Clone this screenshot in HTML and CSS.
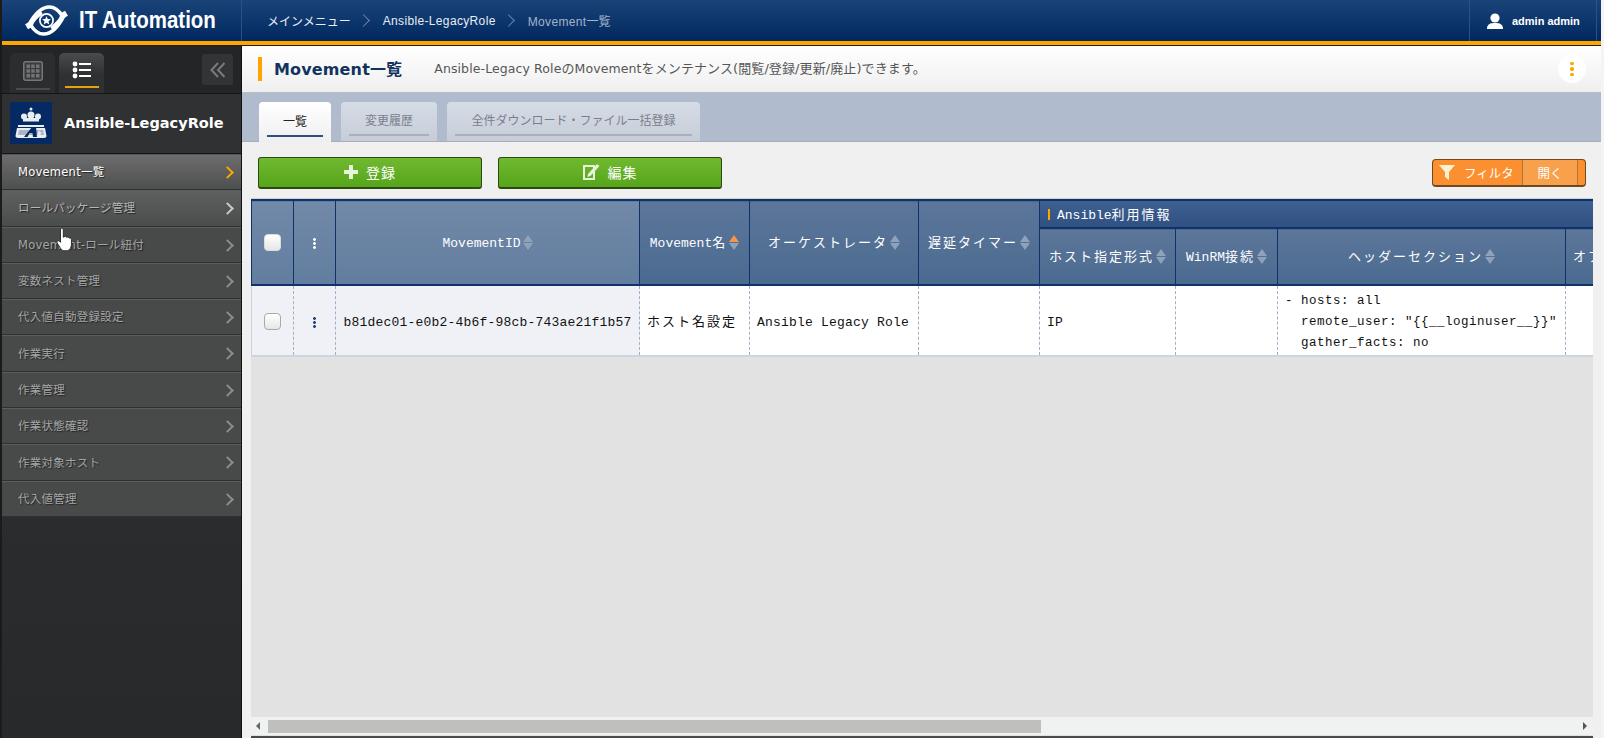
FILE: index.html
```html
<!DOCTYPE html>
<html lang="ja">
<head>
<meta charset="utf-8">
<title>Movement一覧</title>
<link rel="stylesheet" href="styles.css">
</head>
<body>
<div class="frame">
  <header class="topbar">
    <div class="brand">
      <svg class="brand-logo" viewBox="0 0 44 34" width="43" height="33">
        <g fill="none" stroke="#fff" stroke-linecap="round">
          <path d="M4 21 C10 10 17 3 25 3 C31 3 35 7 38 12 C36 18 32 21 28 24" stroke-width="3.600"/>
          <path d="M40 12 C34 24 27 31 19 31 C13 31 9 27 6 22 C8 16 12 13 16 10" stroke-width="3.600"/>
          <circle cx="22" cy="17" r="6.800" stroke-width="1.800"/>
        </g>
        <path d="M22 12.500l1.300 3 3.200.3-2.400 2.100.7 3.100-2.800-1.600-2.800 1.600.7-3.100-2.400-2.100 3.200-.3z" fill="#fff"/>
        <rect x="1" y="19" width="6" height="6" fill="#fff" transform="rotate(-30 4 22)"/>
        <rect x="37" y="8" width="6" height="6" fill="#fff" transform="rotate(-30 40 11)"/>
      </svg>
      <span class="brand-name">IT Automation</span>
    </div>
    <nav class="crumbs">
      <span>メインメニュー</span><i class="crumb-sep"></i>
      <span class="crumb-lat">Ansible-LegacyRole</span><i class="crumb-sep"></i>
      <span class="crumb-now"><span class="crumb-lat">Movement</span>一覧</span>
    </nav>
    <div class="user">
      <svg viewBox="0 0 18 16" width="18" height="16"><circle cx="9" cy="5" r="4.600" fill="#fff"/><path d="M1 16c0-5 3-6 8-6s8 1 8 6z" fill="#fff"/></svg>
      <span>admin admin</span>
    </div>
  </header>
  <div class="accent"></div>
  <div class="body">
    <aside class="side">
      <div class="side-tabs">
        <div class="side-tab">
          <svg viewBox="0 0 20 20" width="20" height="20"><rect x=".75" y=".75" width="18.500" height="18.500" rx="2" fill="#3a3c3d" stroke="#777" stroke-width="1.500"/><g fill="#6f7478"><rect x="3.500" y="3.500" width="3.500" height="3.500"/><rect x="8.200" y="3.500" width="3.500" height="3.500"/><rect x="13" y="3.500" width="3.500" height="3.500"/><rect x="3.500" y="8.200" width="3.500" height="3.500"/><rect x="8.200" y="8.200" width="3.500" height="3.500"/><rect x="13" y="8.200" width="3.500" height="3.500"/><rect x="3.500" y="13" width="3.500" height="3.500"/><rect x="8.200" y="13" width="3.500" height="3.500"/><rect x="13" y="13" width="3.500" height="3.500"/></g></svg>
          <i class="side-tab-line"></i>
        </div>
        <div class="side-tab side-tab-on">
          <svg viewBox="0 0 20 18" width="20" height="18" fill="#fff"><circle cx="3" cy="3" r="2.400"/><circle cx="3" cy="9" r="2.400"/><circle cx="3" cy="15" r="2.400"/><rect x="7" y="2" width="12" height="2"/><rect x="7" y="8" width="12" height="2"/><rect x="7" y="14" width="12" height="2"/></svg>
          <i class="side-tab-line"></i>
        </div>
        <div class="collapse">
          <svg viewBox="0 0 16 16" width="16" height="16" fill="none" stroke="#7a7a7a" stroke-width="2"><path d="M8 1 1.500 8 8 15M14.500 1 8 8l6.500 7"/></svg>
        </div>
      </div>
      <div class="side-title">
        <svg class="side-logo" viewBox="0 0 42 42" width="42" height="42">
          <rect width="42" height="42" fill="#052a63"/>
          <g fill="#e8edf3">
            <circle cx="21" cy="7" r="1.500"/>
            <circle cx="14" cy="14.500" r="3"/>
            <circle cx="21" cy="13" r="3.500"/>
            <circle cx="28" cy="14.500" r="3"/>
            <rect x="13" y="16" width="16" height="3.500"/>
            <rect x="8" y="23" width="26" height="2"/>
            <path d="M7 26h28l1.500 8c0 1-1 2-2.500 2H8c-1.500 0-2.500-1-2.500-2z"/>
          </g>
          <path d="M9 28h24l1 5H8z" fill="#a9b6c8"/>
          <path d="M14 35l8-10h4l1 10h-4l-.5-4h-3l-2 4z" fill="#052a63"/>
          <path d="M29 28l1 2 2.100.2-1.600 1.400.5 2.100-2-1-2 1" fill="#e8edf3"/>
        </svg>
        <span>Ansible-LegacyRole</span>
      </div>
      <ul class="menu">
        <li class="menu-item menu-cur">Movement一覧</li>
        <li class="menu-item menu-hover">ロールパッケージ管理</li>
        <li class="menu-item">Movement-ロール紐付</li>
        <li class="menu-item">変数ネスト管理</li>
        <li class="menu-item">代入値自動登録設定</li>
        <li class="menu-item">作業実行</li>
        <li class="menu-item">作業管理</li>
        <li class="menu-item">作業状態確認</li>
        <li class="menu-item">作業対象ホスト</li>
        <li class="menu-item">代入値管理</li>
      </ul>
    </aside>
    <main class="main">
      <div class="titlebar">
        <h1 class="page-title">Movement一覧</h1>
        <p class="page-desc"><span class="desc-lat">Ansible-Legacy Role</span>の<span class="desc-lat">Movement</span>をメンテナンス(閲覧/登録/更新/廃止)できます。</p>
        <div class="more"><i></i><i></i><i></i></div>
      </div>
      <div class="tabs">
        <div class="tab tab-on"><span>一覧</span></div>
        <div class="tab tab-b"><span>変更履歴</span></div>
        <div class="tab tab-c"><span>全件ダウンロード・ファイル一括登録</span></div>
      </div>
      <div class="content">
        <div class="toolbar">
          <button class="btn">
            <svg viewBox="0 0 14 14" width="14" height="14" fill="#e8f3dc"><rect x="5" width="4" height="14"/><rect y="5" width="14" height="4"/></svg>
            <span>登録</span>
          </button>
          <button class="btn btn-edit">
            <svg viewBox="0 0 17 17" width="17" height="17"><path d="M1 3h10v13H1z" fill="none" stroke="#e8f3dc" stroke-width="2"/><path d="M5 11l9-10 2.500 2-9 10-3 1z" fill="#e8f3dc"/></svg>
            <span>編集</span>
          </button>
          <div class="filter">
            <div class="filter-main">
              <svg viewBox="0 0 16 15" width="16" height="15"><path d="M0 0h16L10 7v8L6 12V7z" fill="#fdf2d0"/></svg>
              <span>フィルタ</span>
            </div>
            <div class="filter-open">開く</div>
            <div class="filter-end"></div>
          </div>
        </div>
        <div class="table-panel">
          <div class="table-clip">
            <table class="grid">
              <colgroup>
                <col class="c-chk"><col class="c-menu"><col class="c-id"><col class="c-name"><col class="c-orch"><col class="c-delay"><col class="c-host"><col class="c-win"><col class="c-head"><col class="c-opt">
              </colgroup>
              <thead>
                <tr>
                  <th rowspan="2" class="th-fixed"><i class="check check-head"></i></th>
                  <th rowspan="2" class="th-fixed"><i class="vdots vdots-w"></i></th>
                  <th rowspan="2" class="th-fixed"><span class="lat">MovementID</span><i class="sort"></i></th>
                  <th rowspan="2"><span class="lat">Movement</span>名<i class="sort sort-up"></i></th>
                  <th rowspan="2">オーケストレータ<i class="sort"></i></th>
                  <th rowspan="2">遅延タイマー<i class="sort"></i></th>
                  <th colspan="4" class="th-group"><b class="group-mark"></b><span class="lat">Ansible</span>利用情報</th>
                </tr>
                <tr>
                  <th>ホスト指定形式<i class="sort"></i></th>
                  <th><span class="lat">WinRM</span>接続<i class="sort"></i></th>
                  <th>ヘッダーセクション<i class="sort"></i></th>
                  <th class="th-left">オプションパラメータ</th>
                </tr>
              </thead>
              <tbody>
                <tr>
                  <td class="td-fixed td-c"><i class="check"></i></td>
                  <td class="td-fixed td-c"><i class="vdots"></i></td>
                  <td class="td-fixed td-c"><span class="lat">b81dec01-e0b2-4b6f-98cb-743ae21f1b57</span></td>
                  <td>ホスト名設定</td>
                  <td class="td-lat"><span class="lat">Ansible Legacy Role</span></td>
                  <td></td>
                  <td><span class="lat">IP</span></td>
                  <td></td>
                  <td><pre class="yaml">- hosts: all
  remote_user: "{{__loginuser__}}"
  gather_facts: no</pre></td>
                  <td></td>
                </tr>
              </tbody>
            </table>
          </div>
          <div class="hscroll">
            <i class="arrow-l"></i>
            <div class="hscroll-track"><div class="hscroll-thumb"></div></div>
            <i class="arrow-r"></i>
          </div>
          <div class="footer-strip"></div>
        </div>
      </div>
    </main>
  </div>
  <svg class="cursor" viewBox="0 0 16 22" width="18" height="25"><path d="M4 1.500c1-1 2.500-.5 2.500 1V9l1-.5c1-.5 2 0 2 .7 1-.7 2-.2 2.200.6 1-.4 2 0 2 1.200v4.500c0 2.500-1.500 5-3.500 5.500H7c-1.500 0-2.500-1.500-3.500-3L1 14c-.6-1.500 1-2.500 2-1.500l1 1z" fill="#fff" stroke="#222" stroke-width=".8"/></svg>
</div>
</body>
</html>
```
FILE: styles.css
```css
* { box-sizing: border-box; }
html, body { margin: 0; height: 100%; overflow: hidden; background: #f4f4f4; }
body { font-family: "DejaVu Sans", "Noto Sans CJK JP", sans-serif; }
ul { list-style: none; margin: 0; padding: 0; }
h1, p { margin: 0; }
i { display: inline-block; font-style: normal; }

.frame { position: relative; width: 1601px; height: 738px; border-left: 2px solid #1b1b1b; display: flex; flex-direction: column; }

.topbar { height: 41px; flex: none; display: flex; align-items: center; background: linear-gradient(#1a4478, #002860); color: #fff; }
.brand { width: 240px; height: 100%; flex: none; display: flex; align-items: center; padding-left: 23px; border-right: 1px solid #2a5288; }
.brand-name { display: inline-block; margin-left: 11px; font: bold 23px "Liberation Sans", sans-serif; white-space: nowrap; transform: scaleX(.89); transform-origin: left center; }
.crumbs { flex: 1; display: flex; align-items: center; padding-left: 25px; font: 12px "Liberation Sans", "Noto Sans CJK JP", sans-serif; color: #e8edf5; }
.crumb-lat { letter-spacing: .35px; }
.crumb-sep { width: 9px; height: 9px; margin: 0 15px 0 8px; border-top: 1.500px solid #6f85a8; border-right: 1.500px solid #6f85a8; transform: rotate(45deg); }
.crumb-now { color: #a5b3c9; }
.user { width: 128px; height: 100%; flex: none; display: flex; align-items: center; gap: 8px; padding-left: 16px; border-left: 1px solid #2a5288; border-right: 1px solid #2a5288; font: bold 11px "Liberation Sans", sans-serif; margin-right: 4px; }
.accent { height: 5px; flex: none; background: #ffa500; border-bottom: 1px solid #1d1d1d; }

.body { flex: 1; min-height: 0; display: flex; }

.side { width: 240px; flex: none; background: linear-gradient(#303233, #27292a); border-right: 1px solid #111; display: flex; flex-direction: column; }
.side-tabs { height: 48px; flex: none; display: flex; align-items: flex-end; gap: 4px; padding: 0 8px; background: #242526; border-bottom: 1px solid #151515; }
.side-tab { width: 45px; height: 40px; display: flex; flex-direction: column; align-items: center; gap: 7px; padding-top: 8px; border-radius: 5px 5px 0 0; background: #2c2d2e; }
.side-tab-on { background: linear-gradient(#4a4b4c, #2f3031 55%); }
.side-tab-line { width: 34px; height: 2px; background: #4a4b4c; }
.side-tab-on .side-tab-line { background: #e8a010; }
.collapse { width: 31px; height: 31px; margin: 0 0 8px auto; display: flex; align-items: center; justify-content: center; border-radius: 3px; background: #333435; }

.side-title { height: 60px; flex: none; display: flex; align-items: center; gap: 12px; padding: 0 0 2px 8px; font: bold 14.500px "DejaVu Sans", sans-serif; color: #fff; background: #303132; border-bottom: 1px solid #151515; }
.side-logo { flex: none; }

.menu-item { position: relative; height: 36.300px; display: flex; align-items: center; padding: 0 0 2px 16px; font-size: 11.500px; letter-spacing: .25px; color: #a4a6a6; background: #484a4a; border-top: 1px solid #5c5e5e; border-bottom: 1px solid #2f3030; text-shadow: 1px 1px 1px #222; }
.menu-item::after { content: ""; position: absolute; right: 9px; top: 13px; width: 7px; height: 7px; border-top: 2px solid #8b8d8d; border-right: 2px solid #8b8d8d; transform: rotate(45deg); }
.menu-cur { color: #fff; background: linear-gradient(#6d6c6e, #4e4f4f); border-top-color: #555; }
.menu-cur::after { border-color: #ffa500; }
.menu-hover { color: #b5b7b7; background: linear-gradient(#5e5f5f, #4b4c4c); }
.menu-hover::after { border-color: #c9cbcb; }

.main { flex: 1; min-width: 0; display: flex; flex-direction: column; background: #f0f0f0; }
.titlebar { height: 47px; flex: none; display: flex; align-items: center; padding-left: 16px; background: linear-gradient(#fff, #efefef); border-bottom: 1px solid #b9bec7; }
.page-title { padding-left: 12px; border-left: 4px solid #ffa500; height: 24px; font: bold 16px/25px "DejaVu Sans", "Noto Sans CJK JP", sans-serif; letter-spacing: .15px; color: #12335f; white-space: nowrap; }
.page-desc { margin: 0 0 3px 32px; flex: 1; font-size: 13px; letter-spacing: .1px; color: #565656; }
.desc-lat { font-size: 12.500px; }
.more { width: 28px; height: 28px; margin-right: 15px; display: flex; flex-direction: column; align-items: center; justify-content: center; gap: 2px; border-radius: 50%; background: #fff; }
.more i { width: 3.500px; height: 3.500px; border-radius: 50%; background: #ffa500; }

.tabs { height: 49px; flex: none; display: flex; align-items: flex-end; gap: 10px; padding-left: 17px; background: #b0bccd; border-bottom: 1px solid #a8aeb8; }
.tab { height: 39px; width: 96px; padding: 0 8px; border-radius: 4px 4px 0 0; display: flex; flex-direction: column; background: linear-gradient(#d6dce5, #c6cdd9); color: #7a808a; font-size: 12px; }
.tab span { flex: 1; display: flex; align-items: center; justify-content: center; border-bottom: 2px solid #a9b0bc; margin-bottom: 5px; padding-top: 3px; }
.tab-on { width: 72px; background: linear-gradient(#fff, #efefef); color: #222; height: 40px; margin-bottom: -1px; }
.tab-on span { border-bottom-color: #2c4f83; }
.tab-c { width: 253px; }

.content { flex: 1; min-height: 0; display: flex; flex-direction: column; }
.toolbar { height: 56px; flex: none; display: flex; align-items: flex-start; padding: 15px 15px 0 16px; gap: 16px; }
.btn { width: 224px; height: 32px; display: flex; align-items: center; justify-content: center; gap: 8px; padding: 0 0 2px; border: 1px solid #2d4a10; border-bottom-width: 2px; border-radius: 3px; background: linear-gradient(#70b930, #56a51a); color: #fff; font: 14px "Noto Sans CJK JP", sans-serif; letter-spacing: 1px; }
.filter { margin: 2px 0 0 auto; width: 154px; height: 28px; display: flex; border: 1px solid #6d4a20; border-bottom-width: 2px; border-radius: 4px; background: #fc9030; color: #fff; font: 12.500px "Noto Sans CJK JP", sans-serif; line-height: 25px; overflow: hidden; }
.filter-main { width: 90px; display: flex; align-items: center; gap: 9px; padding-left: 6px; border-right: 1px solid #a87a3a; }
.filter-open { width: 55px; text-align: center; background: #f9a04c; border-right: 1px solid #a87a3a; }
.filter-end { flex: 1; }

.table-panel { flex: 1; min-height: 0; margin: 0 8px 0 9px; display: flex; flex-direction: column; background: #e2e2e2; border-top: 1px solid #d0d0d0; }
.table-clip { flex: 1; min-height: 0; overflow: hidden; }
.grid { width: 1600px; table-layout: fixed; border-collapse: collapse; font: 13px "Noto Sans CJK JP", sans-serif; letter-spacing: 2px; color: #111; }
.c-chk { width: 42px; } .c-menu { width: 42px; } .c-id { width: 304px; } .c-name { width: 110px; } .c-orch { width: 169px; } .c-delay { width: 121px; } .c-host { width: 136px; } .c-win { width: 102px; } .c-head { width: 288px; } .c-opt { width: 286px; }
.lat { font-family: "Liberation Mono", monospace; letter-spacing: .2px; }
.grid th { font-weight: normal; color: #fff; height: 57px; padding: 0 0 2px; white-space: nowrap; overflow: hidden; background: linear-gradient(#5c7699, #4b6a90); border: 1px solid #0f3369; border-top-width: 2px; border-bottom-width: 2px; }
.grid th .lat { letter-spacing: 0; }
.grid .th-fixed { background: linear-gradient(#7289a8, #627d9f); }
.grid .th-group { height: 28px; text-align: left; padding-left: 8px; background: linear-gradient(#3e6191, #2f5080); }
.grid .th-left { text-align: left; padding-left: 7px; }
.group-mark { display: inline-block; width: 2px; height: 11px; margin-right: 7px; background: #ffa500; vertical-align: -1px; }
.grid td { height: 71px; padding: 0 7px; background: #fff; border-left: 1px dashed #9fb0c6; border-right: 1px dashed #9fb0c6; border-bottom: 2px solid #ccd5e0; white-space: nowrap; }
.grid .td-fixed { background: #f0f1f6; }
.grid .td-fixed:first-child { border-left: 1px solid #c8d2de; }
.td-c { text-align: center; }
.yaml { margin: 3px 0 0; font: 12.500px/21px "Liberation Mono", monospace; letter-spacing: .5px; color: #111; }
.check { width: 17px; height: 17px; vertical-align: middle; border: 1px solid #a9a9a9; border-radius: 4px; background: linear-gradient(#fff, #e6e6e6); }
.check-head { border-color: #ddd; }
.vdots { width: 3px; height: 11px; vertical-align: middle; background: radial-gradient(circle at 50% 1.500px, #1d4374 1.300px, transparent 1.500px) 0 0 / 3px 4px repeat-y; }
.vdots-w { background-image: radial-gradient(circle at 50% 1.500px, #fff 1.300px, transparent 1.500px); }
.sort { position: relative; display: inline-block; width: 10px; height: 15px; margin-left: 2px; vertical-align: -3px; letter-spacing: 0; }
.sort::before, .sort::after { content: ""; position: absolute; left: 0; border-left: 5px solid transparent; border-right: 5px solid transparent; }
.sort::before { top: 0; border-bottom: 7px solid #8ea2bb; }
.sort::after { bottom: 0; border-top: 7px solid #8ea2bb; }
.sort-up::before { border-bottom-color: #f5954a; }

.hscroll { height: 18px; flex: none; display: flex; align-items: center; background: #f0f2f1; }
.arrow-l, .arrow-r { width: 0; height: 0; border-top: 4px solid transparent; border-bottom: 4px solid transparent; margin: 0 5px; }
.arrow-l { border-right: 4px solid #666; }
.arrow-r { border-left: 4px solid #555; margin-right: 6px; }
.hscroll-track { flex: 1; height: 13px; padding-left: 3px; }
.hscroll-thumb { width: 773px; height: 100%; background: #bfbfbd; }
.footer-strip { height: 3px; flex: none; background: linear-gradient(#e0e0e0 1px, #4a4a4a 1px); }

.cursor { position: absolute; left: 54px; top: 227px; }
```
